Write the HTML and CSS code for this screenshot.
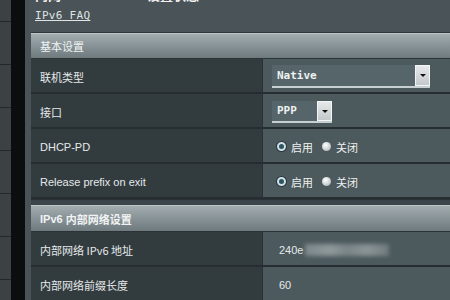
FILE: index.html
```html
<!DOCTYPE html>
<html lang="zh-CN">
<head>
<meta charset="utf-8">
<link rel="stylesheet" href="styles.css">
</head>
<body>
<div class="sidebar">
  <div class="sb-item first"></div>
  <div class="sb-item"></div>
  <div class="sb-item"></div>
  <div class="sb-item"></div>
  <div class="sb-item"></div>
  <div class="sb-item"></div>
  <div class="sb-item"></div>
</div>
<div class="gutter"></div>
<div class="main">
  <div class="top">
    <div class="cut"><span class="cut-a">内网</span><span class="cut-b">设置状态</span></div>
    <a class="faq" href="#">IPv6 FAQ</a>
  </div>
  <div class="table">
    <div class="head">基本设置</div>
    <div class="row">
      <div class="label">联机类型</div>
      <div class="value">
        <div class="select wide"><span>Native</span><i class="arrow"></i></div>
      </div>
    </div>
    <div class="row">
      <div class="label">接口</div>
      <div class="value">
        <div class="select narrow"><span>PPP</span><i class="arrow"></i></div>
      </div>
    </div>
    <div class="row">
      <div class="label lat">DHCP-PD</div>
      <div class="value radios">
        <span class="radio on"></span><span class="rtext">启用</span>
        <span class="radio off"></span><span class="rtext">关闭</span>
      </div>
    </div>
    <div class="row">
      <div class="label lat">Release prefix on exit</div>
      <div class="value radios">
        <span class="radio on"></span><span class="rtext">启用</span>
        <span class="radio off"></span><span class="rtext">关闭</span>
      </div>
    </div>
    <div class="gap"></div>
    <div class="head head2"><b>IPv6</b> 内部网络设置</div>
    <div class="row">
      <div class="label">内部网络 IPv6 地址</div>
      <div class="value lat">240e<span class="blur"></span></div>
    </div>
    <div class="row">
      <div class="label">内部网络前缀长度</div>
      <div class="value lat">60</div>
    </div>
  </div>
</div>
</body>
</html>
```

FILE: styles.css
```css
html, body {
  margin: 0;
  padding: 0;
}
body {
  width: 450px;
  height: 300px;
  overflow: hidden;
  display: flex;
  background: #4a5458;
  font-family: "Noto Sans CJK SC", "Liberation Sans", sans-serif;
  color: #e6e9ea;
}
.sidebar {
  width: 11px;
  flex: none;
  display: flex;
  flex-direction: column;
  background: #3c4244;
}
.sb-item {
  height: 42px;
  flex: none;
  border-bottom: 1px solid #23282a;
}
.sb-item.first {
  height: 21px;
}
.gutter {
  width: 14px;
  flex: none;
  background: #0b0d0e;
}
.main {
  flex: 1;
  padding-left: 6px;
  display: flex;
  flex-direction: column;
  background: #4a5357;
}
.top {
  height: 33px;
  flex: none;
  padding-left: 4px;
  display: flex;
  flex-direction: column;
  box-sizing: border-box;
  border-bottom: 1px solid #2e3639;
}
.cut {
  height: 3px;
  overflow: hidden;
  display: flex;
  align-items: flex-end;
  font-size: 13px;
  font-weight: bold;
  color: #f2f2f2;
  line-height: 13px;
}
.cut span {
  display: block;
  margin-bottom: 2px;
}
.cut-b {
  margin-left: 86px;
}
.faq {
  margin-top: 6px;
  font-family: "DejaVu Sans Mono", "Liberation Mono", monospace;
  font-size: 11px;
  line-height: 13px;
  color: #dfe3e4;
  text-decoration: underline;
  letter-spacing: 0.3px;
  align-self: flex-start;
}
.table {
  display: flex;
  flex-direction: column;
}
.head {
  height: 26px;
  box-sizing: border-box;
  display: flex;
  align-items: center;
  padding-left: 9px;
  font-size: 11px;
  color: #f1f3f3;
  background: linear-gradient(#a3adb0, #8a9599 45%, #6e7a7e);
  border-top: 1px solid #bcc4c6;
  border-bottom: 1px solid #2b3336;
}
.head2 {
  height: 27px;
  font-weight: bold;
}
.head b {
  font-family: "Liberation Sans", sans-serif;
  font-weight: bold;
  margin-right: 3px;
}
.row {
  height: 35px;
  flex: none;
  box-sizing: border-box;
  display: flex;
  border-bottom: 2px solid #262e31;
}
.label {
  width: 232px;
  flex: none;
  box-sizing: border-box;
  padding-left: 9px;
  padding-top: 2px;
  display: flex;
  align-items: center;
  font-size: 11px;
  background: #323c3f;
  border-right: 1px solid #2a3235;
}
.lat {
  font-family: "Liberation Sans", "Noto Sans CJK SC", sans-serif;
  font-size: 11px;
}
.value {
  flex: 1;
  display: flex;
  align-items: center;
  padding-left: 9px;
  padding-top: 2px;
  font-size: 11px;
  background: #4c595d;
}
.value.lat {
  padding-left: 16px;
}
.value.radios {
  padding-left: 14px;
}
.select {
  height: 23px;
  box-sizing: border-box;
  display: flex;
  align-items: center;
  background: #56656a;
  border-bottom: 2px solid #c6cfd1;
  font-family: "DejaVu Sans Mono", "Liberation Mono", monospace;
  font-size: 11px;
  font-weight: bold;
  color: #eef1f1;
}
.select span {
  flex: 1;
  padding-left: 5px;
}
.select.wide {
  width: 158px;
}
.select.narrow {
  width: 60px;
  height: 22px;
}
.arrow {
  width: 15px;
  height: 100%;
  box-sizing: border-box;
  background: linear-gradient(#e6e9ea, #c3c8ca);
  border: 1px solid #f4f6f6;
  position: relative;
}
.arrow::after {
  content: "";
  position: absolute;
  left: 4px;
  top: 8px;
  border-left: 3px solid transparent;
  border-right: 3px solid transparent;
  border-top: 3px solid #111;
}
.radio {
  width: 9px;
  height: 9px;
  border-radius: 50%;
  box-sizing: border-box;
  flex: none;
  margin-right: 5px;
}
.radio.on {
  border: 2px solid #cfe1e7;
  background: #2c5562;
  box-shadow: 0 0 0 1px #2a3a40;
}
.radio.off {
  margin-left: 9px;
  margin-right: 5px;
  background: radial-gradient(circle at 40% 35%, #ffffff, #c9cdcf 60%, #9aa0a2);
}
.rtext {
  font-size: 11px;
  color: #eef0f0;
}
.gap {
  height: 6px;
  flex: none;
  background: #3c4549;
  border-top: 1px solid #2a3235;
  box-sizing: border-box;
}
.blur {
  display: inline-block;
  width: 84px;
  height: 12px;
  margin-left: 2px;
  background: linear-gradient(90deg, #7d888b, #8f999c 30%, #7a8588 50%, #8b9598 75%, #6f7a7d);
  filter: blur(2px);
}
```
